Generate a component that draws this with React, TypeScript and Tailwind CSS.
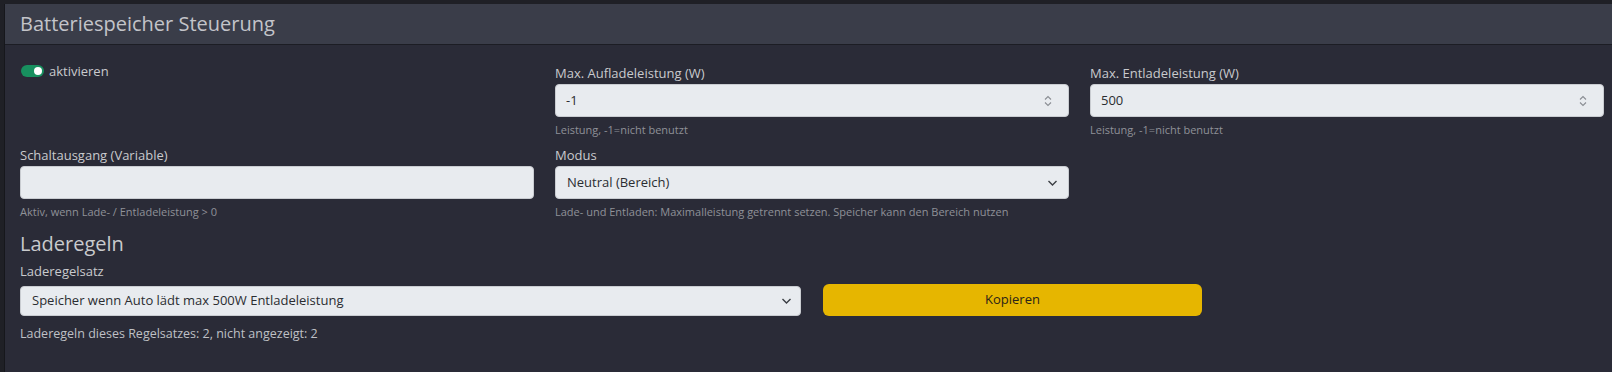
import React from "react";

const font = { fontFamily: '"Open Sans", "Noto Sans", sans-serif' };

function Spinner() {
  return (
    <svg width="8" height="12" viewBox="0 0 8 12" fill="none" stroke="#8a8d93" strokeWidth="1.1">
      <path d="M1 4.5 L4 1.5 L7 4.5" />
      <path d="M1 7.5 L4 10.5 L7 7.5" />
    </svg>
  );
}

function Chevron() {
  return (
    <svg width="11" height="8" viewBox="0 0 11 8" fill="none" stroke="#3b3e44" strokeWidth="1.4">
      <path d="M1.5 2 L5.5 6 L9.5 2" />
    </svg>
  );
}

function NumberField({ label, value, help }: { label: string; value: string; help: string }) {
  return (
    <div className="flex flex-col">
      <div className="text-[13px] leading-[18px] text-[#c9cacd] mb-[2px]">{label}</div>
      <div className="h-[33px] rounded-[4px] bg-[#e8ebef] border border-[#c9ccd1] flex items-center justify-between pl-[10px] pr-[16px] text-[13px] text-[#2b2d31]">
        <span>{value}</span>
        <Spinner />
      </div>
      <div className="mt-[5px] text-[11px] leading-[15px] text-[#8f9198]">{help}</div>
    </div>
  );
}

export default function App() {
  return (
    <div className="w-[1612px] h-[372px] bg-[#1f2026] pt-[4px] pl-[4px] overflow-hidden" style={font}>
      <div className="w-[1640px] h-[368px] border-l border-[#16171c] bg-[#2a2b37]">
        <div className="h-[41px] bg-[#3a3d49] border-b border-[#1c1d24] flex items-center pl-[15px]">
          <span className="text-[20px] text-[#c3c4c9] leading-none">Batteriespeicher Steuerung</span>
        </div>
        <div className="pl-[15px] pt-[19px]">
          <div className="grid grid-cols-[514px_514px_514px] gap-x-[21px]">
            <div className="flex items-start">
              <div className="flex items-center h-[14px]">
                <div className="w-[23px] h-[12px] rounded-full bg-[#18905f] relative ml-[1px]">
                  <div className="absolute right-[2px] top-[2px] w-[8px] h-[8px] rounded-full bg-white" />
                </div>
                <span className="ml-[5px] text-[13px] text-[#c9cacd] leading-[14px]">aktivieren</span>
              </div>
            </div>
            <NumberField label="Max. Aufladeleistung (W)" value="-1" help="Leistung, -1=nicht benutzt" />
            <NumberField label="Max. Entladeleistung (W)" value="500" help="Leistung, -1=nicht benutzt" />
          </div>
          <div className="grid grid-cols-[514px_514px_514px] gap-x-[21px] mt-[9px]">
            <div className="flex flex-col">
              <div className="text-[13px] leading-[18px] text-[#c9cacd] mb-[2px]">Schaltausgang (Variable)</div>
              <div className="h-[33px] rounded-[4px] bg-[#e8ebef] border border-[#c9ccd1]" />
              <div className="mt-[5px] text-[11px] leading-[15px] text-[#8f9198]">Aktiv, wenn Lade- / Entladeleistung &gt; 0</div>
            </div>
            <div className="flex flex-col">
              <div className="text-[13px] leading-[18px] text-[#c9cacd] mb-[2px]">Modus</div>
              <div className="h-[33px] rounded-[4px] bg-[#e8ebef] border border-[#c9ccd1] flex items-center justify-between pl-[11px] pr-[10px] text-[13px] text-[#2b2d31]">
                <span>Neutral (Bereich)</span>
                <Chevron />
              </div>
              <div className="mt-[5px] text-[11px] leading-[15px] text-[#8f9198]">
                Lade- und Entladen: Maximalleistung getrennt setzen. Speicher kann den Bereich nutzen
              </div>
            </div>
            <div />
          </div>
          <div className="mt-[13px] text-[20px] leading-[24px] text-[#c9cacd]">Laderegeln</div>
          <div className="mt-[6px] text-[13px] leading-[18px] text-[#c9cacd]">Laderegelsatz</div>
          <div className="flex items-end gap-x-[22px] mt-[4px]">
            <div className="w-[781px] h-[30px] rounded-[4px] bg-[#e8ebef] border border-[#c9ccd1] flex items-center justify-between pl-[11px] pr-[8px] text-[13px] text-[#2b2d31]">
              <span>Speicher wenn Auto lädt max 500W Entladeleistung</span>
              <Chevron />
            </div>
            <div className="w-[379px] h-[32px] rounded-[6px] bg-[#e6b600] flex items-center justify-center text-[13px] text-[#2a2418]">
              Kopieren
            </div>
          </div>
          <div className="mt-[9px] text-[12.5px] leading-[18px] text-[#bfc0c5]">
            Laderegeln dieses Regelsatzes: 2, nicht angezeigt: 2
          </div>
        </div>
      </div>
    </div>
  );
}
